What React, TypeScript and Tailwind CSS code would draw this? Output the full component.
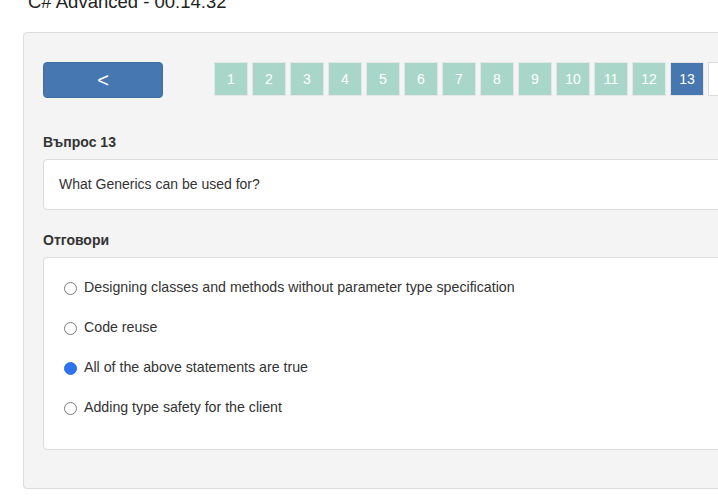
import React from "react";

const answers = [
  "Designing classes and methods without parameter type specification",
  "Code reuse",
  "All of the above statements are true",
  "Adding type safety for the client",
];

export default function App() {
  const selected = 2;
  const current = 13;
  return (
    <div
      className="h-[503px] w-[718px] overflow-hidden bg-white text-[#333]"
      style={{ fontFamily: '"Liberation Sans", Arial, "Noto Sans CJK SC", sans-serif' }}
    >
      <h1 className="ml-[28px] mt-[-7px] whitespace-nowrap text-[18.5px] leading-[18px] font-normal text-[#222]">
        C# Advanced - 00:14:32
      </h1>

      <div className="ml-[23px] mt-[21px] w-[1000px] rounded-[4px] border border-[#dcdcdc] bg-[#f4f4f4] pb-[38px] pl-[19px] pt-[29px]">
        {/* Navigation */}
        <div className="flex flex-nowrap items-start">
          <button className="flex h-[36px] w-[120px] shrink-0 items-center justify-center rounded-[4px] border border-[#3f6da6] bg-[#4677b1] text-[20px] leading-none text-white">
            &lt;
          </button>
          <div className="ml-[51px] flex flex-nowrap gap-[4px]">
            {Array.from({ length: 20 }, (_, i) => i + 1).map((n) => (
              <div
                key={n}
                className={
                  n === current
                    ? "flex h-[34px] w-[34px] shrink-0 items-center justify-center border border-[#e3e3e3] bg-[#4677b1] text-[14px] text-white"
                    : n < current
                      ? "flex h-[34px] w-[34px] shrink-0 items-center justify-center border border-[#e6e6e6] bg-[#a8d7c9] text-[14px] text-white"
                      : "flex h-[34px] w-[34px] shrink-0 items-center justify-center border border-[#dcdcdc] bg-white text-[14px] text-[#333]"
                }
              >
                {n}
              </div>
            ))}
          </div>
        </div>

        {/* Question */}
        <div className="mt-[35px] text-[14px] font-bold leading-[18px]">Въпрос 13</div>
        <div className="mt-[8px] flex h-[51px] items-center rounded-[4px] border border-[#dcdcdc] bg-white pl-[15px] text-[14px]">
          What Generics can be used for?
        </div>

        {/* Answers */}
        <div className="mt-[21px] text-[14px] font-bold leading-[18px]">Отговори</div>
        <div className="mt-[8px] flex h-[193px] flex-col rounded-[4px] border border-[#dcdcdc] bg-white pl-[20px] pt-[10px]">
          {answers.map((a, i) => (
            <label key={a} className="flex h-[40px] shrink-0 items-center gap-[7px] text-[14.2px]">
              {i === selected ? (
                <span className="h-[13px] w-[13px] shrink-0 rounded-full border border-[#2f6fe6] bg-[#2f72ee]" />
              ) : (
                <span className="h-[13px] w-[13px] shrink-0 rounded-full border border-[#7a7a7a] bg-white" />
              )}
              <span>{a}</span>
            </label>
          ))}
        </div>
      </div>
    </div>
  );
}
